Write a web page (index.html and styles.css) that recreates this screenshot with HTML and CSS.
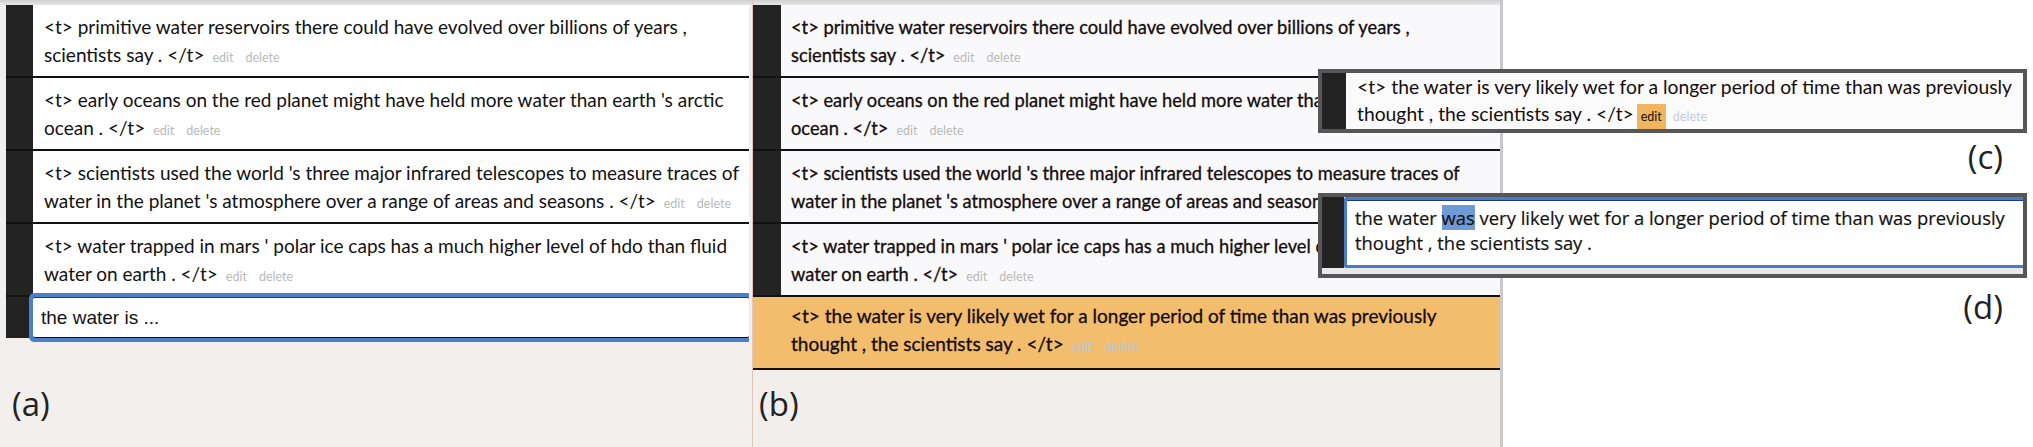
FILE: index.html
```html
<!DOCTYPE html>
<html>
<head>
<meta charset="utf-8">
<link rel="stylesheet" href="styles.css">
</head>
<body>
<section class="panel panel-a">
  <div class="topband"></div>
  <div class="list list-a">
    <div class="row">
      <div class="bar"></div>
      <div class="cell">
        <span class="line">&lt;t&gt; primitive water reservoirs there could have evolved over billions of years ,</span>
        <span class="line">scientists say . &lt;/t&gt;<span class="act">edit</span><span class="act">delete</span></span>
      </div>
    </div>
    <div class="row">
      <div class="bar"></div>
      <div class="cell">
        <span class="line">&lt;t&gt; early oceans on the red planet might have held more water than earth 's arctic</span>
        <span class="line">ocean . &lt;/t&gt;<span class="act">edit</span><span class="act">delete</span></span>
      </div>
    </div>
    <div class="row">
      <div class="bar"></div>
      <div class="cell">
        <span class="line">&lt;t&gt; scientists used the world 's three major infrared telescopes to measure traces of</span>
        <span class="line">water in the planet 's atmosphere over a range of areas and seasons . &lt;/t&gt;<span class="act">edit</span><span class="act">delete</span></span>
      </div>
    </div>
    <div class="row">
      <div class="bar"></div>
      <div class="cell">
        <span class="line">&lt;t&gt; water trapped in mars ' polar ice caps has a much higher level of hdo than fluid</span>
        <span class="line">water on earth . &lt;/t&gt;<span class="act">edit</span><span class="act">delete</span></span>
      </div>
    </div>
    <div class="row row-input">
      <div class="bar"></div>
      <div class="input">the water is ...</div>
    </div>
  </div>
  <div class="label">(a)</div>
</section>

<section class="panel panel-b">
  <div class="topband"></div>
  <div class="list list-b">
    <div class="row row-b">
      <div class="bar"></div>
      <div class="cell">
        <span class="line">&lt;t&gt; primitive water reservoirs there could have evolved over billions of years ,</span>
        <span class="line">scientists say . &lt;/t&gt;<span class="act">edit</span><span class="act">delete</span></span>
      </div>
    </div>
    <div class="row row-b">
      <div class="bar"></div>
      <div class="cell">
        <span class="line">&lt;t&gt; early oceans on the red planet might have held more water than earth 's arctic</span>
        <span class="line">ocean . &lt;/t&gt;<span class="act">edit</span><span class="act">delete</span></span>
      </div>
    </div>
    <div class="row row-b">
      <div class="bar"></div>
      <div class="cell">
        <span class="line">&lt;t&gt; scientists used the world 's three major infrared telescopes to measure traces of</span>
        <span class="line">water in the planet 's atmosphere over a range of areas and seasons . &lt;/t&gt;<span class="act">edit</span><span class="act">delete</span></span>
      </div>
    </div>
    <div class="row row-b">
      <div class="bar"></div>
      <div class="cell">
        <span class="line">&lt;t&gt; water trapped in mars ' polar ice caps has a much higher level of hdo than fluid</span>
        <span class="line">water on earth . &lt;/t&gt;<span class="act">edit</span><span class="act">delete</span></span>
      </div>
    </div>
    <div class="row row-hl">
      <div class="cell">
        <span class="line">&lt;t&gt; the water is very likely wet for a longer period of time than was previously</span>
        <span class="line">thought , the scientists say . &lt;/t&gt;<span class="act">edit</span><span class="act">delete</span></span>
      </div>
    </div>
  </div>
  <div class="label">(b)</div>
</section>

<div class="vsep"></div>

<aside class="side">
  <div class="label">(c)</div>
  <div class="label">(d)</div>
</aside>

<div class="pop pop-c">
  <div class="bar"></div>
  <div class="cell">
    <span class="line">&lt;t&gt; the water is very likely wet for a longer period of time than was previously</span>
    <span class="line">thought , the scientists say . &lt;/t&gt;<span class="act act-on">edit</span><span class="act act-off">delete</span></span>
  </div>
</div>

<div class="pop pop-d">
  <div class="drow">
    <div class="bar"></div>
    <div class="dinput">
      <span class="line">the water <span class="sel">was</span> very likely wet for a longer period of time than was previously</span>
      <span class="line">thought , the scientists say .</span>
    </div>
  </div>
  <div class="dstrip"></div>
</div>
</body>
</html>
```
FILE: styles.css
```css
* { box-sizing: border-box; }
html, body { margin: 0; padding: 0; }
body {
  width: 2033px;
  height: 447px;
  overflow: hidden;
  display: flex;
  position: relative;
  background: #ffffff;
  font-family: Lato, "Liberation Sans", sans-serif;
  color: #111111;
}

.panel {
  flex: none;
  display: flex;
  flex-direction: column;
  height: 447px;
}
.panel-a { width: 752px; background: #f2efed; }
.panel-b { width: 748px; background: #f1eeec; border-left: 1px solid #ebc3b6; }

.topband {
  flex: none;
  height: 5px;
  background: linear-gradient(#d0d0d0, #e6e6e6);
}

.list-a { margin-left: 6px; width: 743px; }
.list-b { width: 747px; overflow: hidden; }

.row {
  display: flex;
  height: 73px;
  border-bottom: 2px solid #111111;
  background: #ffffff;
}
.row-b { background: #f9f9fb; }

.bar { flex: none; width: 27px; background: #232323; }
.list-b .bar { width: 28px; }

.cell {
  padding: 8px 0 0 11px;
  font-size: 19px;
  line-height: 28px;
  white-space: nowrap;
}
.list-b .cell {
  padding-left: 10px;
  font-size: 18.3px;
  color: #140c0c;
  -webkit-text-stroke: 0.3px #140c0c;
}
.list-b .cell .act { -webkit-text-stroke: 0; }

.line { display: block; }

.act {
  font-size: 12.5px;
  color: #b9b9b9;
  margin-left: 8px;
}
.act + .act { margin-left: 12px; }

.row-input {
  height: 41px;
  border-bottom: 0;
  background: #ffffff;
}
.input {
  flex: 1;
  background: #ffffff;
  border-top: 1px solid #1f3e7c;
  border-bottom: 1px solid #111111;
  border-radius: 2px;
  box-shadow: 0 0 0 4px #4c7ecb;
  clip-path: inset(-6px 0 -6px -6px);
  padding-left: 8px;
  font-family: "Liberation Sans", Arial, sans-serif;
  font-size: 19px;
  line-height: 39px;
  color: #111111;
}

.list-b .row-hl .cell { padding: 5px 0 0 38px; font-size: 19px; }
.row-hl { background: #f3bd6e; }
.row-hl .act { color: #b9c4d6; }

.label {
  font-family: "Open Sans", sans-serif;
  font-size: 33px;
  line-height: 40px;
  color: #222222;
}
.panel-a .label { margin: 46px 0 0 12px; }
.panel-b .label { margin: 14px 0 0 6px; }

.vsep { flex: none; width: 3px; background: #c9c9c9; }

.side {
  flex: 1;
  display: flex;
  flex-direction: column;
  align-items: flex-end;
  padding: 137px 30px 0 0;
}
.side .label + .label { margin-top: 110px; }

.pop {
  position: absolute;
  left: 1318px;
  width: 709px;
  border: 4px solid #565656;
  display: flex;
  background: #fbfbfc;
}
.pop-c { top: 69px; height: 64px; }
.pop-c .bar { width: 24px; }
.pop-c .cell {
  padding: 0 0 0 11px;
  font-size: 19.3px;
  line-height: 27px;
  color: #140c0c;
}
.pop-c .act-on {
  background: #f2b55f;
  color: #111111;
  padding: 5px 4px;
  margin-left: 3px;
}
.pop-c .act-off { color: #c3cddd; margin-left: 7px; }

.pop-d { top: 193px; height: 85px; flex-direction: column; }
.drow { display: flex; height: 71px; }
.pop-d .bar { width: 22px; }
.dinput {
  flex: 1;
  border: 3px solid #4a7bc8;
  border-right: 0;
  border-radius: 3px 0 0 3px;
  box-shadow: inset 0 1px 0 #1c3a78;
  background: #ffffff;
  padding: 5px 0 0 8px;
  font-family: "Open Sans", sans-serif;
  font-size: 18.4px;
  line-height: 25px;
  white-space: nowrap;
  color: #111111;
  -webkit-text-stroke: 0.2px #111111;
}
.sel { background: #6e9bd6; }
.dstrip { height: 6px; background: #e8e8ea; }
```
